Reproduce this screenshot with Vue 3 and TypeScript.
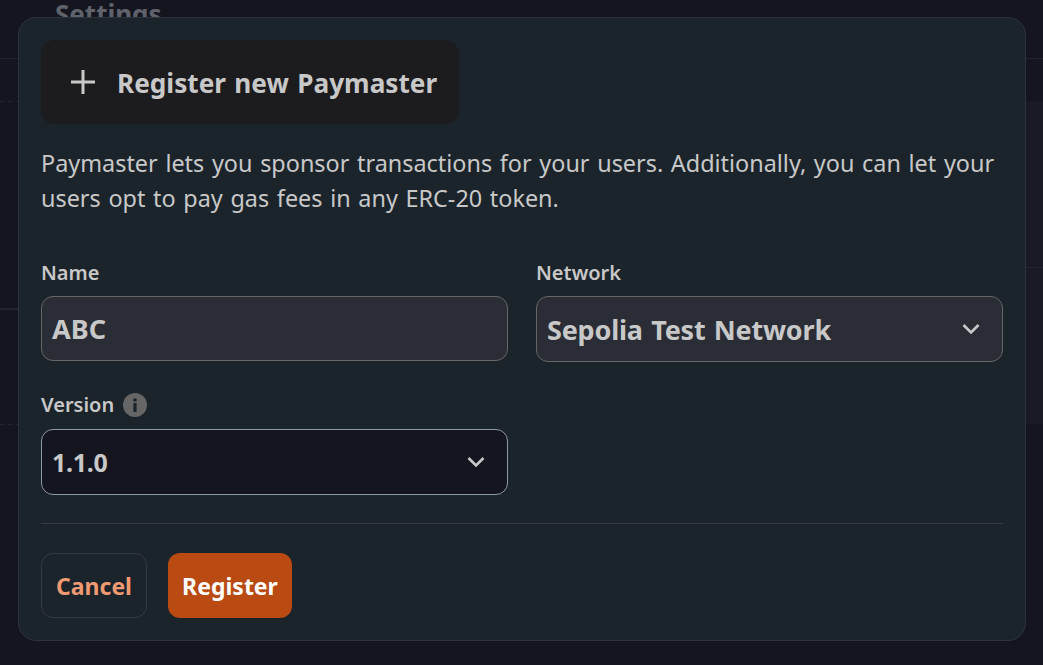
<script setup lang="ts">
const infoText: string = 'Paymaster lets you sponsor transactions for your users. Additionally, you can let your users opt to pay gas fees in any ERC-20 token.'
</script>

<template>
  <div class="page">
    <div class="backdrop">
      <h2 class="settings">Settings</h2>
      <div class="line l1"></div>
      <div class="line dash l2"></div>
      <div class="line left l3"></div>
      <div class="line dash l4"></div>
      <div class="band"><div class="band-line"></div></div>
    </div>
    <section class="modal">
      <header class="title-box">
        <svg class="plus" viewBox="0 0 26 26" width="26" height="26" fill="none" stroke="#c8c8c8" stroke-width="3">
          <path d="M13 1v24M1 13h24" />
        </svg>
        <span class="title-text">Register new Paymaster</span>
      </header>
      <p class="info">{{ infoText }}</p>
      <div class="grid">
        <div class="field">
          <label class="lbl">Name</label>
          <div class="control name">ABC</div>
        </div>
        <div class="field">
          <label class="lbl">Network</label>
          <div class="control net">
            <span>Sepolia Test Network</span>
            <svg class="chev" viewBox="0 0 18 12" width="18" height="12" fill="none" stroke="#c8c8c8" stroke-width="2.6">
              <path d="M1.5 2l7.5 7.5L16.5 2" />
            </svg>
          </div>
        </div>
        <div class="field ver">
          <label class="lbl vlbl">Version
            <svg class="i" viewBox="0 0 24 24" width="24" height="24">
              <circle cx="12" cy="12" r="12" fill="#666" />
              <rect x="10.4" y="10" width="3.2" height="9" fill="#1c242b" />
              <rect x="10.4" y="5.5" width="3.2" height="3" fill="#1c242b" />
            </svg>
          </label>
          <div class="control vers">
            <span>1.1.0</span>
            <svg class="chev" viewBox="0 0 18 12" width="18" height="12" fill="none" stroke="#c8c8c8" stroke-width="2.6">
              <path d="M1.5 2l7.5 7.5L16.5 2" />
            </svg>
          </div>
        </div>
      </div>
      <hr class="rule" />
      <footer class="actions">
        <button class="btn cancel">Cancel</button>
        <button class="btn register">Register</button>
      </footer>
    </section>
  </div>
</template>

<style>
html, body { margin: 0; background: #14151f; }
</style>

<style scoped>
.page {
  width: 1043px;
  height: 665px;
  position: relative;
  overflow: hidden;
  background: #14151f;
  font-family: "Noto Sans", "Open Sans", sans-serif;
  color: #c8c8c8;
  box-sizing: border-box;
}
.settings {
  margin: 0;
  padding: 0 0 0 55px;
  font-size: 26px;
  line-height: 28px;
  font-weight: 700;
  color: #5f626b;
}
.line { position: absolute; left: 0; right: 0; height: 1px; background: #23252e; }
.line.dash { right: auto; width: 18px; background: repeating-linear-gradient(90deg, #23252e 0 5px, transparent 5px 8px); }
.line.left { right: auto; width: 18px; height: 2px; }
.l1 { top: 58px; }
.l2 { top: 101px; }
.l3 { top: 308px; }
.l4 { top: 424px; }
.band { position: absolute; right: 0; top: 101px; width: 20px; height: 323px; background: #191a24; }
.band-line { margin-top: 166px; height: 1px; background: #23252e; }
.modal {
  position: absolute;
  left: 18px;
  top: 17px;
  width: 1008px;
  height: 624px;
  box-sizing: border-box;
  padding: 22px;
  background: #1c242b;
  border: 1px solid #2e343b;
  border-radius: 18px;
  display: flex;
  flex-direction: column;
}
.title-box {
  align-self: flex-start;
  box-sizing: border-box;
  width: 418px;
  height: 84px;
  display: flex;
  align-items: center;
  gap: 22px;
  padding-left: 29px;
  background: #1c1c1f;
  border-radius: 14px;
  font-size: 26.2px;
  font-weight: 700;
  word-spacing: 1.5px;
}
.title-text { padding-top: 2px; margin-left: -1px; }
.info {
  margin: 22px 0 0;
  font-size: 23.4px;
  line-height: 35px;
  word-spacing: 1.6px;
}
.grid {
  margin-top: 44px;
  display: grid;
  grid-template-columns: 467px 467px;
  column-gap: 28px;
  row-gap: 30px;
}
.field { display: flex; flex-direction: column; }
.lbl {
  font-size: 20px;
  line-height: 26px;
  font-weight: 600;
  margin-bottom: 10px;
}
.vlbl { display: flex; align-items: center; gap: 9px; height: 26px; margin-bottom: 11px; }
.control {
  box-sizing: border-box;
  height: 65px;
  border-radius: 12px;
  border: 1px solid #666;
  background: #2a2d35;
  display: flex;
  align-items: center;
  justify-content: space-between;
  padding: 0 22px 0 10px;
  font-size: 27px;
  font-weight: 700;
}
.name { letter-spacing: 0; }
.net { height: 66px; word-spacing: 1.5px; letter-spacing: -0.2px; }
.vers { height: 66px; background: #14151f; border-color: #8f98a5; padding-right: 22px; font-size: 25px; letter-spacing: -0.3px; }
.rule {
  margin: 28px 0 0;
  border: 0;
  height: 1px;
  background: #33393f;
}
.actions { margin-top: 29px; display: flex; gap: 21px; }
.btn {
  font-family: inherit;
  height: 65px;
  border-radius: 12px;
  font-size: 23px;
  font-weight: 700;
  box-sizing: border-box;
  padding: 0;
}
.cancel { width: 106px; background: transparent; border: 1px solid #343a42; color: #f09a73; }
.register { width: 124px; background: #b84a12; border: 0; color: #fff; }
</style>
